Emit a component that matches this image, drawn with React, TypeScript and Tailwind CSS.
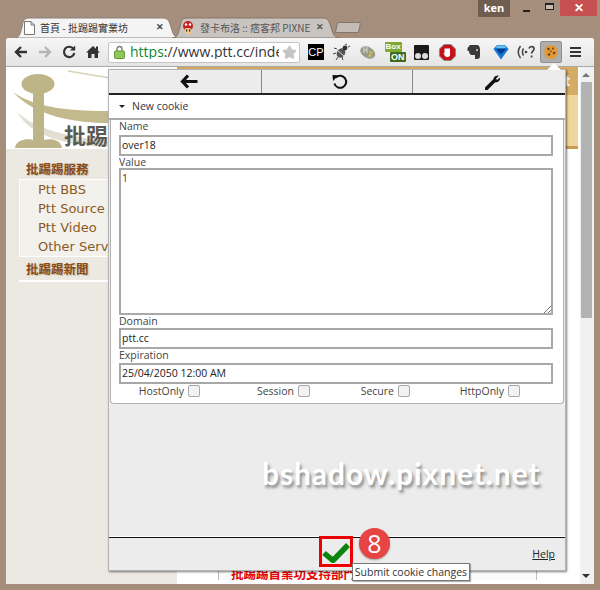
import React from 'react';
import { Star } from 'lucide-react';

const CJK = "font-['Noto_Sans_CJK_TC','Noto_Sans',sans-serif]";

function Tab({ active, width, children }: { active?: boolean; width: number; children: React.ReactNode }) {
  return (
    <div className="relative h-full shrink-0 -mr-[8px] flex items-center pl-[9px] pr-[16px]" style={{ width }}>
      <svg className="absolute inset-0 h-full w-full" viewBox={`0 0 ${width} 21`} preserveAspectRatio="none">
        <path
          d={`M0 21 C5 21 6 18 8 10 C9 4 10 1 15 1 L${width - 17} 1 C${width - 12} 1 ${width - 11} 4 ${width - 9} 10 C${width - 7} 18 ${width - 5} 21 ${width} 21 Z`}
          fill={active ? '#f4f4f4' : '#c9c4c0'}
          stroke={active ? '#8a8078' : '#85766a'}
          strokeWidth="1"
        />
      </svg>
      <div className="relative flex w-full items-center gap-[5px]">{children}</div>
    </div>
  );
}

function ToolIcon({ children }: { children: React.ReactNode }) {
  return <div className="flex h-[21px] w-[24px] shrink-0 items-center justify-center">{children}</div>;
}

function BrowserChrome() {
  return (
    <>
      {/* caption row */}
      <div className="flex h-[17px] shrink-0 items-start justify-end -mr-[3px]">
        <div className="flex h-[17px] w-[32px] items-center justify-center bg-[#6f5d50] text-[11px] font-bold text-white font-['Open_Sans',sans-serif]">ken</div>
        <div className="ml-[8px] flex h-[15px] w-[16px] items-end justify-center pb-[3px]">
          <div className="h-[2px] w-[7px] bg-[#222]" />
        </div>
        <div className="ml-[7px] flex h-[15px] w-[16px] items-center justify-center pb-[2px]">
          <div className="h-[7px] w-[9px] border border-t-2 border-[#222] bg-[#c9bdb3]" />
        </div>
        <div className="ml-[3px] flex h-[16px] w-[37px] items-center justify-center bg-[#c75050] text-[12px] font-bold leading-none text-white font-['Liberation_Sans',sans-serif]">✕</div>
      </div>

      {/* tab strip */}
      <div className="flex h-[21px] shrink-0 items-end pl-[8px]">
        <Tab active width={166}>
          <svg width="11" height="14" viewBox="0 0 11 14" className="shrink-0 ml-[1px]">
            <path d="M0.5 0.5 H7 L10.5 4 V13.5 H0.5 Z M7 0.5 V4 H10.5" fill="#fff" stroke="#777" />
          </svg>
          <span className={`min-w-0 flex-1 overflow-hidden whitespace-nowrap text-[10px] leading-none text-[#333] ${CJK}`}>首頁 - 批踢踢實業坊</span>
          <span className="text-[9px] font-bold text-[#444] font-['Liberation_Sans',sans-serif]">✕</span>
        </Tab>
        <Tab width={168}>
          <svg width="14" height="14" viewBox="0 0 14 14" className="shrink-0">
            <circle cx="7" cy="5" r="5" fill="#c81e1e" />
            <circle cx="5" cy="3.5" r="1.2" fill="#fff" />
            <circle cx="9" cy="3.5" r="1.2" fill="#fff" />
            <rect x="3.5" y="7" width="7" height="6" rx="2" fill="#f2c68c" />
            <rect x="5" y="8.5" width="1.2" height="2" fill="#222" />
            <rect x="8" y="8.5" width="1.2" height="2" fill="#222" />
          </svg>
          <span className={`min-w-0 flex-1 overflow-hidden whitespace-nowrap text-[10px] leading-none text-[#555] ${CJK}`}>發卡布洛 :: 痞客邦 PIXNET</span>
          <span className="text-[9px] font-bold text-[#555] font-['Liberation_Sans',sans-serif]">✕</span>
        </Tab>
        <div className="mb-[5px] ml-[4px] h-[11px] w-[24px] -skew-x-12 rounded-t-[2px] border border-[#85766a] bg-[#c4bdb7]" />
      </div>

      {/* toolbar */}
      <div className="flex h-[29px] shrink-0 items-center rounded-t-[2px] bg-gradient-to-b from-[#f6f6f6] to-[#e4e4e4] border-b border-[#a8a8a8]">
        <div className="flex w-[102px] shrink-0 items-center justify-center">
          <ToolIcon>
            <svg width="14" height="14" viewBox="0 0 14 14"><path d="M7 2 L2 7 L7 12 M2 7 H13" fill="none" stroke="#333" strokeWidth="2.4" /></svg>
          </ToolIcon>
          <ToolIcon>
            <svg width="14" height="14" viewBox="0 0 14 14"><path d="M7 2 L12 7 L7 12 M12 7 H1" fill="none" stroke="#b5b5b5" strokeWidth="2.4" /></svg>
          </ToolIcon>
          <ToolIcon>
            <svg width="14" height="14" viewBox="0 0 14 14"><path d="M11.5 4 A5.2 5.2 0 1 0 12.3 8" fill="none" stroke="#333" strokeWidth="2.2" /><path d="M8 5.5 H13.2 V0.5 Z" fill="#333" /></svg>
          </ToolIcon>
          <ToolIcon>
            <svg width="14" height="14" viewBox="0 0 14 14"><path d="M7 1 L14 7.5 H12 V13 H8.5 V9 H5.5 V13 H2 V7.5 H0 Z" fill="#333" /><rect x="10" y="1.5" width="2" height="4" fill="#333" /></svg>
          </ToolIcon>
        </div>
        <div className="flex h-[21px] w-[192px] shrink-0 items-center overflow-hidden rounded-[2px] border border-[#c4c4c4] bg-white pl-[5px] pr-[2px]">
          <svg width="11" height="14" viewBox="0 0 11 14" className="shrink-0">
            <path d="M3 6 V4 A2.5 2.5 0 0 1 8 4 V6" fill="none" stroke="#777" strokeWidth="1.4" />
            <rect x="0.5" y="6" width="10" height="7.5" rx="1" fill="#8fc85a" stroke="#5f9a36" />
          </svg>
          <div className="ml-[5px] w-[149px] overflow-hidden whitespace-nowrap text-[14px] leading-none text-[#333] font-['Open_Sans',sans-serif]">
            <span className="text-[#0b8a2c]">https</span>://www.ptt.cc/index.html
          </div>
          <Star size={15} className="ml-[3px] shrink-0 fill-[#c4c4c4] text-[#c4c4c4]" />
        </div>
        <div className="flex flex-1 items-center pl-[3px]">
          <div className="flex w-[26px] shrink-0 justify-center">
            <div className="flex h-[16px] w-[16px] items-center justify-center bg-black text-[11px] leading-none text-white font-['Liberation_Sans',sans-serif]">CP</div>
          </div>
          <div className="flex w-[26px] shrink-0 justify-center">
            <svg width="18" height="18" viewBox="0 0 18 18">
              <ellipse cx="8" cy="10" rx="4" ry="5" fill="#555" transform="rotate(35 8 10)" />
              <circle cx="12" cy="5" r="2.4" fill="#333" />
              <path d="M12 2 L14 1 M15 4 L17 3 M4 6 L1 5 M3 10 L0 11 M5 14 L3 17 M9 14 L10 17" stroke="#444" strokeWidth="1" />
              <path d="M5 8 L11 13" stroke="#ddd" strokeWidth="1" />
            </svg>
          </div>
          <div className="flex w-[26px] shrink-0 justify-center">
            <svg width="18" height="16" viewBox="0 0 18 16">
              <ellipse cx="9" cy="8.5" rx="8" ry="5.5" fill="#9a9a8e" transform="rotate(30 9 8)" />
              <path d="M5 3 V9 M8 3 V9 M5 6 H8" stroke="#dcdcc8" strokeWidth="1" />
              <path d="M10 8 H13 L10 12 H13" fill="none" stroke="#e0c430" strokeWidth="1.2" />
            </svg>
          </div>
          <div className="flex w-[28px] shrink-0 justify-center">
            <div className="flex h-[20px] w-[21px] flex-col items-start font-['Liberation_Sans',sans-serif] font-bold leading-none">
              <div className="rounded-[1px] bg-[#7ea82f] px-[1px] text-[8px] leading-[10px] text-white">Box</div>
              <div className="self-end rounded-[1px] bg-[#3d6b1f] px-[1px] text-[9px] leading-[10px] text-white">ON</div>
            </div>
          </div>
          <div className="flex w-[25px] shrink-0 justify-center">
            <div className="flex h-[15px] w-[15px] items-end justify-center gap-[1px] rounded-[1px] bg-[#1a1a1a] pb-[1px]">
              <div className="h-[6px] w-[6px] rounded-full bg-[#ddd]" />
              <div className="h-[6px] w-[6px] rounded-full bg-[#ddd]" />
            </div>
          </div>
          <div className="flex w-[27px] shrink-0 justify-center">
            <svg width="17" height="17" viewBox="0 0 17 17">
              <path d="M5 0.5 H12 L16.5 5 V12 L12 16.5 H5 L0.5 12 V5 Z" fill="#c4131a" stroke="#888" />
              <path d="M5.5 7 V4.5 H11 V11 C11 12.5 9.5 13 8 13 C6.5 13 5.5 11.5 4.5 9.5 L5.5 9 Z" fill="#fff" />
            </svg>
          </div>
          <div className="flex w-[26px] shrink-0 justify-center">
            <svg width="14" height="16" viewBox="0 0 14 16">
              <path d="M3 1 H10 C12 1 13 3 13 6 V12 C13 14 12 15 10 15 H8 V11 H5 C3 11 2 9 2 7 H0.5 V4 Z" fill="#3a3a3a" />
              <circle cx="10" cy="6" r="1" fill="#ddd" />
            </svg>
          </div>
          <div className="flex w-[27px] shrink-0 justify-center">
            <svg width="16" height="16" viewBox="0 0 16 16">
              <path d="M0.5 5 L4 1 H12 L15.5 5 L8 15.5 Z" fill="#1478d4" />
              <path d="M3 5 H13 L8 10.5 Z" fill="#063a8a" />
              <path d="M4 1.5 H12 L13 4 H3 Z" fill="#6fc1f5" />
            </svg>
          </div>
          <div className="flex w-[26px] shrink-0 justify-center">
            <svg width="20" height="16" viewBox="0 0 20 16">
              <path d="M3.5 2 C0.5 6 0.5 10 3.5 14 M6.5 4.5 C5 7 5 9 6.5 11.5" fill="none" stroke="#444" strokeWidth="1.5" />
              <circle cx="9" cy="8" r="1.3" fill="#444" />
              <path d="M12 4.5 C12.5 2 17 2 17 4.8 C17 7.2 14.6 7 14.6 9.6 M14.6 11.5 V13.5" fill="none" stroke="#444" strokeWidth="1.7" />
            </svg>
          </div>
          <div className="flex h-[22px] w-[22px] shrink-0 items-center justify-center rounded-[2px] border border-[#8f8f8f] bg-[#aeaeae]">
            <svg width="16" height="16" viewBox="0 0 16 16">
              <circle cx="8" cy="8" r="7" fill="#e09a3a" />
              <circle cx="5.5" cy="5" r="1.2" fill="#6a3a12" />
              <circle cx="10" cy="4.5" r="1" fill="#6a3a12" />
              <circle cx="11" cy="9" r="1.2" fill="#6a3a12" />
              <circle cx="6" cy="10.5" r="1.2" fill="#6a3a12" />
              <circle cx="8" cy="7.5" r="0.8" fill="#6a3a12" />
            </svg>
          </div>
          <div className="ml-[8px] flex w-[11px] shrink-0 flex-col gap-[2px]">
            <div className="h-[2px] bg-[#333]" />
            <div className="h-[2px] bg-[#333]" />
            <div className="h-[2px] bg-[#333]" />
          </div>
        </div>
      </div>
    </>
  );
}

function PageBehind() {
  return (
    <div className="flex min-h-0 flex-1 bg-white">
      {/* left column */}
      <div className="flex w-[171px] shrink-0 flex-col bg-[#ece9e2]">
        <div className="relative h-[82px] shrink-0 overflow-hidden bg-white">
          <svg width="171" height="82" viewBox="0 0 171 82" className="absolute inset-0">
            <path d="M7 25 C30 42 70 44 104 44 L104 56 C70 56 30 50 7 25 Z" fill="#c2b98d" />
            <path d="M11 45 C30 62 60 70 104 74 L104 80 C60 78 25 70 11 45 Z" fill="#e2dfd2" />
            <path d="M62 4 L104 11" stroke="#d8d3b8" strokeWidth="1.5" />
            <ellipse cx="32" cy="17" rx="16.5" ry="10" fill="#bdb488" />
            <rect x="27" y="24" width="11" height="50" fill="#bdb488" />
            <path d="M9 81 C10 73 20 71 28 73 H37 C46 71 55 73 56 81 Z" fill="#bdb488" />
          </svg>
          <div className={`absolute left-[58px] top-[54px] text-[22px] font-bold leading-[26px] whitespace-nowrap text-[#5b5a52] ${CJK}`}>批踢踢實業坊</div>
        </div>
        <div className="pl-[13px] pt-[12px]">
          <div className={`pl-[7px] text-[12.5px] font-bold leading-[16px] text-[#8a4a18] [text-shadow:1px_1px_1px_#c9c0aa] ${CJK}`}>批踢踢服務</div>
          <div className="mt-[2px] flex flex-col overflow-hidden whitespace-nowrap border border-white bg-[#f3f1ec] pl-[18px] text-[13px] leading-[19px] text-[#8b5a1e] font-['DejaVu_Sans',sans-serif]">
            <span>Ptt BBS</span>
            <span>Ptt Source</span>
            <span>Ptt Video</span>
            <span>Other Services</span>
          </div>
          <div className={`mt-[3px] border-b-2 border-white pb-[2px] pl-[7px] text-[12.5px] font-bold leading-[18px] text-[#8a4a18] [text-shadow:1px_1px_1px_#c9c0aa] ${CJK}`}>批踢踢新聞</div>
        </div>
      </div>

      {/* main column */}
      <div className="flex min-w-0 flex-1 flex-col justify-between">
        <div className="mr-[2px] border-t border-[#d9aa5c]">
          <div className="flex h-[27px] items-center justify-end bg-[#d4ac66] pr-[8px] text-[15px] font-bold text-white font-['Liberation_Sans',sans-serif]">t</div>
          <div className="h-[51px] bg-[#f0d69a]" />
          <div className="h-[3px] bg-[#c99c52]" />
        </div>
        <div className="flex h-[16px] shrink-0 items-start">
          <div className="w-[41px] shrink-0" />
          <div className={`flex-1 overflow-hidden whitespace-nowrap border-l border-r border-[#bdbdbd] bg-[#fafafa] pl-[12px] text-[12.5px] font-bold leading-[12px] text-[#e80000] ${CJK}`}>批踢踢首業功支持部門</div>
          <div className="w-[43px] shrink-0" />
        </div>
      </div>

      {/* scrollbar */}
      <div className="flex w-[14px] shrink-0 flex-col items-center bg-[#f1f1f1] pr-[2px]">
        <div className="mt-[6px] h-0 w-0 border-x-[4px] border-b-[4px] border-x-transparent border-b-[#777]" />
        <div className="mt-[5px] h-[236px] w-[11px] bg-[#b3b3b3]" />
        <div className="mt-auto mb-[6px] h-0 w-0 border-x-[4px] border-t-[4px] border-x-transparent border-t-[#333]" />
      </div>
    </div>
  );
}

function Field({ label, value, labelClass }: { label: string; value: string; labelClass: string }) {
  return (
    <div className="flex flex-col">
      <label className={`${labelClass} text-[10.5px] leading-[13px] text-[#444]`}>{label}</label>
      <div className="flex h-[21px] items-center border-2 border-[#a8a8a8] bg-white pl-[1px] text-[10.5px] text-[#222]">{value}</div>
    </div>
  );
}

function Flag({ label, width }: { label: string; width: number }) {
  return (
    <div className="flex items-center justify-end gap-[4px] text-[10.5px] leading-none text-[#444]" style={{ width }}>
      <span>{label}</span>
      <div className="h-[12px] w-[12px] rounded-[2px] border border-[#a8a8a8] bg-[#f2f2f2]" />
    </div>
  );
}

function CookiePopup() {
  return (
    <div className="absolute left-[108px] top-[69px] flex h-[502px] w-[458px] flex-col border border-[#b4b4b4] bg-[#ececec] shadow-[1px_1px_2px_rgba(0,0,0,0.5)] font-['Open_Sans',sans-serif]">
      {/* white arrow to the toolbar button */}
      <div className="absolute -top-[7px] left-[438px] h-0 w-0 border-x-[7px] border-b-[7px] border-x-transparent border-b-white" />

      <div className="flex h-[25px] shrink-0 border-b-2 border-[#222]">
        <div className="flex w-[153px] items-center justify-center border-r border-[#888] pl-[7px]">
          <svg width="18" height="15" viewBox="0 0 18 15"><path d="M8 1.5 L2.5 7.5 L8 13.5 M3 7.5 H17.5" fill="none" stroke="#111" strokeWidth="3.2" /></svg>
        </div>
        <div className="flex w-[151px] items-center justify-center border-r border-[#888] pl-[6px]">
          <svg width="16" height="16" viewBox="0 0 16 16"><path d="M4 3.5 A6 6 0 1 1 2.4 9.5" fill="none" stroke="#111" strokeWidth="2" /><path d="M0.5 1 L6.5 1.2 L1 7 Z" fill="#111" /></svg>
        </div>
        <div className="flex flex-1 items-center justify-center pl-[8px]">
          <svg width="16" height="16" viewBox="0 0 16 16"><path d="M1.5 14.5 L9 7" stroke="#111" strokeWidth="3.5" strokeLinecap="round" /><path d="M8.5 7.5 C7.5 4 10 1 14 1.5 L11 4.5 L12 6 L15 3.5 C15.5 7 12.5 9 9 8 Z" fill="#111" /></svg>
        </div>
      </div>

      <div className="flex h-[25px] shrink-0 items-center gap-[7px] border-b-2 border-[#aaaaaa] bg-white pl-[10px] text-[10.5px] text-[#334]">
        <div className="h-0 w-0 border-x-[3px] border-t-[3px] border-x-transparent border-t-[#222]" />
        <span>New cookie</span>
      </div>

      <div className="mx-[1px] flex h-[284px] shrink-0 flex-col rounded-b-[4px] border border-t-0 border-[#b0b0b0] bg-white pl-[8px] pr-[10px]">
        <Field label="Name" value="over18" labelClass="h-[15px]" />
        <label className="h-[12px] text-[10.5px] leading-[12px] text-[#444]">Value</label>
        <div className="relative h-[147px] shrink-0 border-2 border-[#a8a8a8] bg-white pl-[1px] pt-[1px] text-[10.5px] leading-[14px] text-[#7a1c1c]">
          1
          <svg width="8" height="8" viewBox="0 0 8 8" className="absolute bottom-0 right-0"><path d="M1 8 L8 1 M5 8 L8 5" stroke="#777" /></svg>
        </div>
        <Field label="Domain" value="ptt.cc" labelClass="h-[13px]" />
        <Field label="Expiration" value="25/04/2050 12:00 AM" labelClass="h-[14px]" />
        <div className="mt-[1px] flex">
          <Flag label="HostOnly" width={81} />
          <Flag label="Session" width={110} />
          <Flag label="Secure" width={100} />
          <Flag label="HttpOnly" width={110} />
        </div>
      </div>

      <div className="mt-auto h-[33px] shrink-0 border-t border-[#111] shadow-[0_-1px_0_#fff]">
        <div className="flex h-full items-center justify-end pr-[10px] pt-[2px] text-[10.5px] text-[#222] underline">Help</div>
      </div>
    </div>
  );
}

function Watermark() {
  return (
    <div className="absolute left-[262px] top-[453px] text-[30px] font-bold leading-[40px] tracking-[0.9px] whitespace-nowrap text-white [text-shadow:2px_3px_3px_#8f8f8f] font-['Lato',sans-serif]">
      bshadow.pixnet.net
    </div>
  );
}

function SubmitAnnotation() {
  return (
    <>
      <div className="absolute left-[319px] top-[536px] flex h-[31px] w-[34px] items-center justify-center border-[3px] border-[#ee0000]">
        <svg width="28" height="20" viewBox="0 0 28 20" className="mt-[3px] shrink-0">
          <path d="M2 10 L11 17.5 L26 2" fill="none" stroke="#0c8410" strokeWidth="5.5" />
        </svg>
      </div>
      <div className="absolute left-[359px] top-[528px] flex h-[31px] w-[31px] items-center justify-center rounded-full bg-[#e94444] text-[25px] leading-none text-white shadow-[0_1px_2px_rgba(0,0,0,0.35)] font-['Open_Sans',sans-serif]">8</div>
      <div className="absolute left-[352px] top-[563px] flex h-[18px] w-[118px] items-center justify-center border border-[#777] bg-white text-[10.5px] leading-none text-[#333] shadow-[1px_1px_1px_rgba(0,0,0,0.3)] font-['Open_Sans',sans-serif]">Submit cookie changes</div>
    </>
  );
}

export default function App() {
  return (
    <div className="relative flex h-[590px] w-[600px] flex-col overflow-hidden bg-[#a68e7c] px-[6px] pb-[6px]">
      <BrowserChrome />
      <PageBehind />
      <CookiePopup />
      <Watermark />
      <SubmitAnnotation />
    </div>
  );
}
